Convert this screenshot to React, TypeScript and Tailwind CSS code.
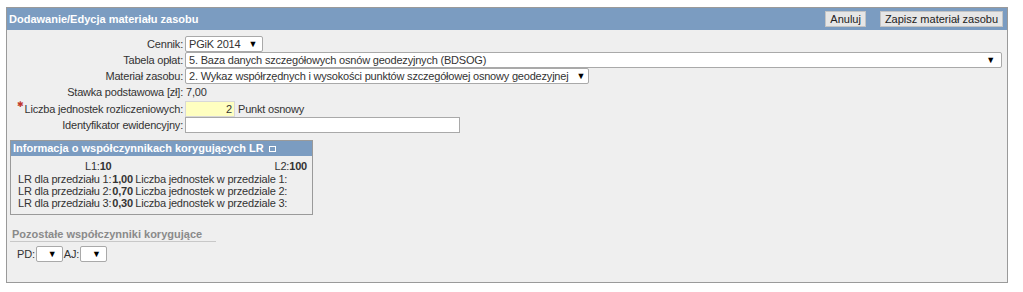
const font = { fontFamily: '"Liberation Sans", Arial, sans-serif' };

const Select = ({ value, className }: { value: string; className: string }) => (
  <div className={`flex items-center justify-between bg-white border border-[#a9a9a9] rounded-[2px] h-[16px] pl-[3px] pr-[6px] ${className}`}>
    <span className="leading-none whitespace-nowrap">{value}</span>
    <span className="text-[9px] leading-none text-black ml-2">▼</span>
  </div>
);

const Row = ({ label, children, required }: { label: string; children: React.ReactNode; required?: boolean }) => (
  <div className="flex items-center h-[16px]">
    <div className="w-[177px] text-right pr-[1px] text-[#333] whitespace-nowrap relative">
      {required && <span className="absolute left-[10px] top-[-2px] text-[#c0392b] text-[8px] tracking-normal">✱</span>}
      {label}
    </div>
    <div className="flex items-center pl-[1px]">{children}</div>
  </div>
);

export default function App() {
  return (
    <div className="w-[1023px] h-[292px] overflow-hidden bg-white pt-[7px] pl-[6px] text-[11px] text-[#333] tracking-[-0.2px]" style={font}>
      <div className="w-[1002px] h-[276px] border border-[#9a9a9a] bg-[#efefef] flex flex-col">
        <div className="h-[22px] shrink-0 bg-[#7b9cc1] flex items-center justify-between pl-[2px] pr-[4px]">
          <span className="text-white font-bold tracking-normal">Dodawanie/Edycja materiału zasobu</span>
          <div className="flex gap-[14px] tracking-normal">
            <button className="bg-[#e6e6e6] border border-[#c4c4c4] h-[16px] px-[4px] leading-none text-[#222]">Anuluj</button>
            <button className="bg-[#e6e6e6] border border-[#c4c4c4] h-[16px] px-[4px] leading-none text-[#222]">Zapisz materiał zasobu</button>
          </div>
        </div>

        <div className="pt-[6px] flex flex-col">
          <Row label="Cennik:">
            <Select value="PGiK 2014" className="w-[78px]" />
          </Row>
          <Row label="Tabela opłat:">
            <Select value="5. Baza danych szczegółowych osnów geodezyjnych (BDSOG)" className="w-[817px]" />
          </Row>
          <Row label="Materiał zasobu:">
            <Select value="2. Wykaz współrzędnych i wysokości punktów szczegółowej osnowy geodezyjnej" className="w-[404px]" />
          </Row>
          <Row label="Stawka podstawowa [zł]:">
            <span className="pl-[1px]">7,00</span>
          </Row>
          <div className="h-[1px]" />
          <Row label="Liczba jednostek rozliczeniowych:" required>
            <div className="w-[50px] h-[16px] bg-[#ffffc0] border border-[#d8d8d8] text-right pr-[2px] leading-[14px]">2</div>
            <span className="ml-[3px]">Punkt osnowy</span>
          </Row>
          <Row label="Identyfikator ewidencyjny:">
            <div className="w-[275px] h-[16px] bg-white border border-[#a9a9a9]" />
          </Row>
        </div>

        <div className="ml-[3px] mt-[7px] w-[303px] border border-[#9a9a9a] shrink-0">
          <div className="h-[15px] bg-[#7b9cc1] text-white font-bold flex items-center pl-[2px] leading-none whitespace-nowrap tracking-normal">
            Informacja o współczynnikach korygujących LR
            <span className="ml-[5px] inline-block w-[7px] h-[6px] border border-white" />
          </div>
          <div className="pt-[4px] pb-[5px] pl-[7px] pr-[5px] leading-[12px] whitespace-nowrap">
            <div className="flex justify-between pl-[67px] mb-[1px]">
              <span>L1:<b>10</b></span>
              <span>L2:<b>100</b></span>
            </div>
            {[
              ["1", "1,00"],
              ["2", "0,70"],
              ["3", "0,30"],
            ].map(([n, v]) => (
              <div key={n} className="flex">
                <span>LR dla przedziału {n}:</span>
                <b className="w-[23px] ml-[1px]">{v}</b>
                <span>Liczba jednostek w przedziale {n}:</span>
              </div>
            ))}
          </div>
        </div>

        <div className="ml-[3px] mt-[13px] w-[206px] border-b border-[#c8c8c8] pl-[2px] leading-[12px] pb-[1px] text-[#8a8a8a] font-bold whitespace-nowrap tracking-normal">
          Pozostałe współczynniki korygujące
        </div>
        <div className="flex items-center mt-[4px] pl-[10px] gap-[1px]">
          <span>PD:</span>
          <Select value="" className="w-[27px] pr-[7px]" />
          <span>AJ:</span>
          <Select value="" className="w-[27px] pr-[7px]" />
        </div>
      </div>
    </div>
  );
}
